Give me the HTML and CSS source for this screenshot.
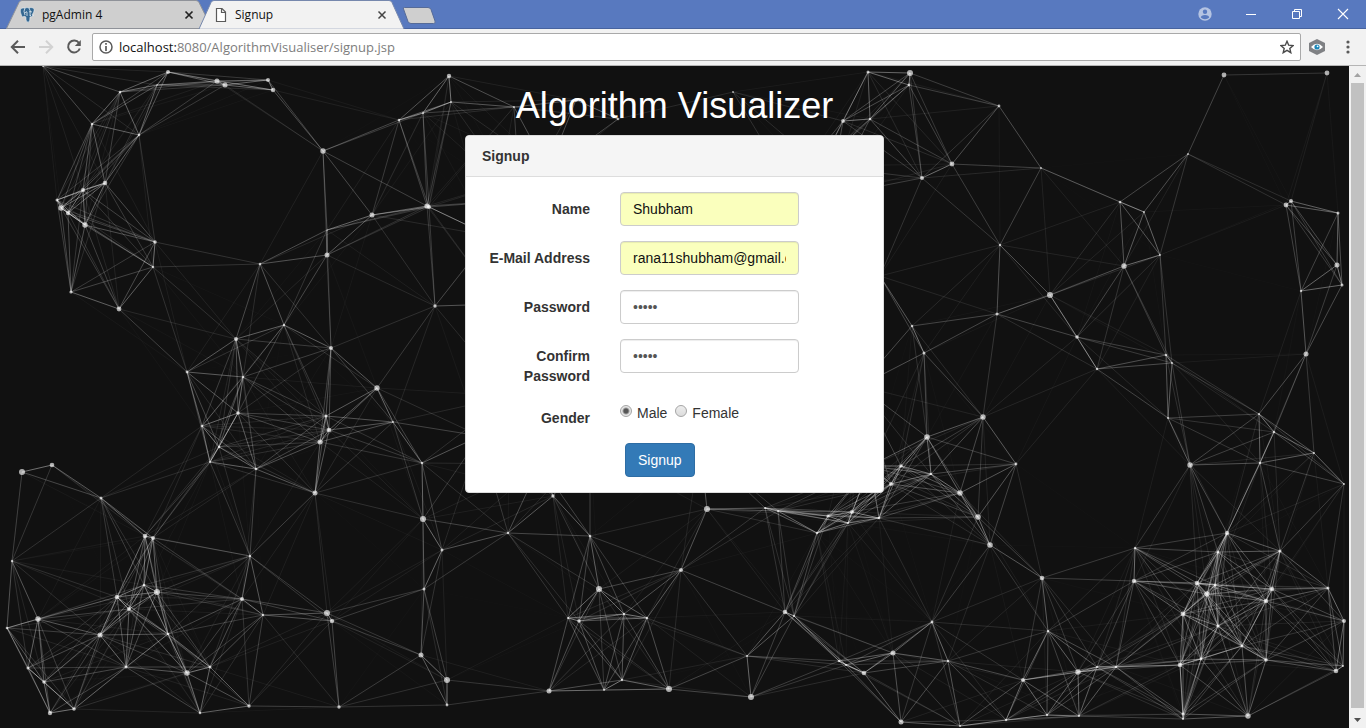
FILE: index.html
```html
<!DOCTYPE html>
<html lang="en">
<head>
<meta charset="utf-8">
<title>Signup</title>
<link rel="stylesheet" href="styles.css">
</head>
<body class="browser">
<header class="chrome">
  <div class="tab-strip">
    <svg class="tab-shapes" width="450" height="29" viewBox="0 0 450 29" aria-hidden="true">
      <path d="M6.500 28.500L19 2.500Q20 .5 22 .5H196Q198 .5 199 2.500L212 28.500Z" fill="#cfcfcf" stroke="#8f9299"/>
      <path d="M403.500 9Q402.500 7.500 404.500 7.500H428Q430 7.500 431 9.500L435 21Q436 23.500 433.500 23.500H411Q409 23.500 408 21.500Z" fill="#cfcfcf" stroke="#566b98"/>
      <path d="M199 29L211 2.500Q212 .5 214 .5H389Q391 .5 392 2.500L404 29Z" fill="#f2f2f2" stroke="#7688ad"/>
      <path d="M200 28.500H403V29H200Z" fill="#f2f2f2"/>
    </svg>
    <div class="tab">
      <svg width="16" height="16" viewBox="0 0 16 16" aria-hidden="true">
        <path d="M3 1C0 1 0 4 1 7C2 10 3 11 4 9C5 10 6 9 6 11V13Q7 16 9 15Q10 14 10 10Q12 10 14 8Q12 9 12 8C14 5 15 2 13 1Q11 0 9 1Q7 0 5 1Z" fill="#336791" stroke="#e4edf3" stroke-width=".6"/>
        <path d="M5 1Q3 4 5 8M9 1Q11 3 10 9M5 6Q6 4 7 5V9M9 5Q10 4 12 5M10 9L11 8" fill="none" stroke="#e4edf3" stroke-width=".8"/>
      </svg>
      <span class="tab-title">pgAdmin 4</span>
      <button class="tab-close" aria-label="Close pgAdmin 4"><svg width="10" height="10" viewBox="0 0 10 10"><path d="M1.500 1.500L8.500 8.500M8.500 1.500L1.500 8.500" stroke="#222" stroke-width="1.700"/></svg></button>
    </div>
    <div class="tab">
      <svg width="16" height="16" viewBox="0 0 16 16" aria-hidden="true"><path d="M3.500 1.500H9L12.500 5V14.500H3.500ZM8.500 1.500V5.500H12.500" fill="#fff" stroke="#5a5a5a" stroke-width="1.200"/></svg>
      <span class="tab-title">Signup</span>
      <button class="tab-close" aria-label="Close Signup"><svg width="10" height="10" viewBox="0 0 10 10"><path d="M1.500 1.500L8.500 8.500M8.500 1.500L1.500 8.500" stroke="#444" stroke-width="1.500"/></svg></button>
    </div>
    <div class="window-controls">
      <button aria-label="Profile"><svg width="14" height="14" viewBox="0 0 14 14"><circle cx="7" cy="7" r="6.700" fill="#b4c3e2"/><circle cx="7" cy="4.800" r="2.200" fill="#5879bf"/><path d="M2.800 10.500Q3 8 7 8T11.200 10.500Q9.500 12.300 7 12.300T2.800 10.500Z" fill="#5879bf"/></svg></button>
      <button aria-label="Minimize"><svg width="12" height="12" viewBox="0 0 12 12"><path d="M1 6.500H11" stroke="#fff"/></svg></button>
      <button aria-label="Restore"><svg width="12" height="12" viewBox="0 0 12 12"><path d="M1.500 3.500H8.500V10.500H1.500ZM3.500 3V1.500H10.500V8.500H9" fill="none" stroke="#fff"/></svg></button>
      <button aria-label="Close"><svg width="12" height="12" viewBox="0 0 12 12"><path d="M1 1L11 11M11 1L1 11" stroke="#fff" stroke-width="1.100"/></svg></button>
    </div>
  </div>
  <div class="toolbar">
    <button class="nav-button" aria-label="Back"><svg width="16" height="16" viewBox="0 0 16 16"><path d="M15 8H2M8 1.800L1.800 8L8 14.200" fill="none" stroke="#5a5a5a" stroke-width="2"/></svg></button>
    <button class="nav-button" aria-label="Forward"><svg width="16" height="16" viewBox="0 0 16 16"><path d="M1 8H14M8 1.800L14.200 8L8 14.200" fill="none" stroke="#d2d2d2" stroke-width="2"/></svg></button>
    <button class="nav-button" aria-label="Reload"><svg width="16" height="16" viewBox="0 0 16 16"><path d="M13 4A6 6 0 1 0 13.800 9.500" fill="none" stroke="#5a5a5a" stroke-width="2"/><path d="M14.800 1V7H8.800Z" fill="#5a5a5a"/></svg></button>
    <div class="omnibox">
      <svg width="14" height="14" viewBox="0 0 14 14" aria-hidden="true"><circle cx="7" cy="7" r="6" fill="none" stroke="#5a5a5a" stroke-width="1.500"/><path d="M7 3V4.700M7 6V11" stroke="#5a5a5a" stroke-width="1.700"/></svg>
      <div class="url">localhost:<span class="url-path">8080/AlgorithmVisualiser/signup.jsp</span></div>
      <button class="star" aria-label="Bookmark"><svg width="14" height="14" viewBox="0 0 14 14"><path d="M7 1.300L8.700 5.200L13 5.600L9.800 8.400L10.800 12.700L7 10.400L3.200 12.700L4.200 8.400L1 5.600L5.300 5.200Z" fill="none" stroke="#4a4a4a" stroke-width="1.400"/></svg></button>
    </div>
    <button class="extension" aria-label="Extension"><svg width="16" height="16" viewBox="0 0 16 16"><path d="M8 0L16 4V12L8 16L0 12V4Z" fill="#7f8184"/><path d="M2 8Q8 1.500 14 8Q8 14.500 2 8Z" fill="#fff"/><circle cx="8" cy="8" r="2.600" fill="#1b87b8"/><circle cx="8.600" cy="7.300" r=".9" fill="#fff"/></svg></button>
    <button class="menu" aria-label="Menu"><svg width="4" height="14" viewBox="0 0 4 14"><circle cx="2" cy="2" r="1.600" fill="#5a5a5a"/><circle cx="2" cy="7" r="1.600" fill="#5a5a5a"/><circle cx="2" cy="12" r="1.600" fill="#5a5a5a"/></svg></button>
  </div>
</header>
<div class="viewport">
  <main class="page">
    <svg class="particles" id="particles" viewBox="0 0 1349 662" preserveAspectRatio="xMidYMid slice" aria-hidden="true"></svg>
    <h1 class="page-title">Algorithm Visualizer</h1>
    <section class="panel">
      <h2 class="panel-heading">Signup</h2>
      <form class="panel-body">
        <div class="field"><label class="field-label" for="name">Name</label><input class="text-input autofilled" id="name" type="text" value="Shubham"></div>
        <div class="field"><label class="field-label" for="email">E-Mail Address</label><input class="text-input autofilled" id="email" type="text" value="rana11shubham@gmail.com"></div>
        <div class="field"><label class="field-label" for="password">Password</label><input class="text-input" id="password" type="password" value="abcde"></div>
        <div class="field"><label class="field-label" for="confirm">Confirm Password</label><input class="text-input" id="confirm" type="password" value="abcde"></div>
        <div class="field" role="radiogroup" aria-labelledby="gender"><span class="field-label" id="gender">Gender</span>
          <div class="choices">
            <input class="radio" type="radio" name="gender" id="male" checked><label for="male">Male</label>
            <input class="radio" type="radio" name="gender" id="female"><label for="female">Female</label>
          </div>
        </div>
        <button class="submit" type="button">Signup</button>
      </form>
    </section>
  </main>
  <div class="scrollbar" aria-hidden="true">
    <svg width="17" height="17" viewBox="0 0 17 17"><path d="M5 11L8.500 7L12 11Z" fill="#a3a3a3"/></svg>
    <div class="thumb"></div>
    <svg width="17" height="17" viewBox="0 0 17 17"><path d="M5 7L8.500 11L12 7Z" fill="#505050"/></svg>
  </div>
</div>
<script src="particles.js"></script>
</body>
</html>
```
FILE: styles.css
```css
* { box-sizing: border-box; }

.browser {
  margin: 0;
  height: 100vh;
  display: flex;
  flex-direction: column;
  overflow: hidden;
  background: #111;
  font-family: "Liberation Sans", Arial, sans-serif;
}

.browser button {
  font: inherit;
  cursor: pointer;
}

.chrome {
  flex: none;
  font-family: "Open Sans", "Noto Sans", sans-serif;
}

.chrome button {
  display: flex;
  align-items: center;
  justify-content: center;
  padding: 0;
  border: 0;
  background: none;
}

.tab-strip {
  position: relative;
  display: flex;
  height: 29px;
  background: #5879bf;
  box-shadow: inset 0 -1px #47639f;
}

.tab-shapes {
  position: absolute;
  left: 0;
  top: 0;
}

.tab {
  position: relative;
  display: flex;
  align-items: center;
  width: 193px;
  margin-left: 20px;
  gap: 6px;
  font-size: 12px;
  color: #111;
}

.tab + .tab { margin-left: 0; }

.tab-title { flex: 1; }

.tab-close {
  width: 10px;
  margin-right: 19px;
}

.tab + .tab .tab-close { margin-right: 19px; }

.window-controls {
  display: flex;
  margin-left: auto;
  height: 27px;
}

.window-controls button { width: 46px; }

.toolbar {
  display: flex;
  align-items: center;
  height: 37px;
  padding: 0 11px 0 10px;
  background: #f2f2f2;
  border-bottom: 1px solid #b5b5b5;
}

.nav-button { margin-right: 12px; }

.omnibox {
  flex: 1;
  display: flex;
  align-items: center;
  height: 28px;
  padding: 0 6px;
  gap: 6px;
  margin-right: 8px;
  margin-left: -2px;
  background: #fff;
  border: 1px solid #a9a9a9;
  border-radius: 2px;
  font-size: 13px;
  color: #111;
}

.url { flex: 1; }

.url-path { color: #7d7d7d; }

.menu {
  width: 14px;
  margin-left: 16px;
}

.viewport {
  flex: 1;
  display: flex;
  min-height: 0;
}

.page {
  position: relative;
  flex: 1;
  min-width: 0;
  display: flex;
  flex-direction: column;
  align-items: center;
  overflow: hidden;
  background: #111;
  font-size: 14px;
  line-height: 20px;
  color: #333;
}

.particles {
  position: absolute;
  inset: 0;
  width: 100%;
  height: 100%;
}

.page-title {
  position: relative;
  margin: 20px 0 9px;
  font-size: 36px;
  font-weight: 400;
  line-height: 40px;
  color: #fff;
}

.panel {
  position: relative;
  width: 100%;
  max-width: 419px;
  background: #fff;
  border: 1px solid #ddd;
  border-radius: 4px;
}

.panel-heading {
  margin: 0;
  padding: 10px 16px;
  font-size: 14px;
  font-weight: 700;
  background: #f5f5f5;
  border-bottom: 1px solid #ddd;
  border-radius: 3px 3px 0 0;
}

.panel-body {
  display: flex;
  flex-direction: column;
  gap: 15px;
  padding: 15px 16px;
}

.field {
  display: grid;
  grid-template-columns: 108px 179px;
  column-gap: 30px;
  align-items: start;
}

.field-label {
  padding-top: 7px;
  font-weight: 700;
  text-align: right;
}

.text-input {
  width: 100%;
  height: 34px;
  padding: 6px 12px;
  font: inherit;
  color: #555;
  background: #fff;
  border: 1px solid #ccc;
  border-radius: 4px;
  box-shadow: inset 0 1px 1px rgba(0, 0, 0, .075);
}

.autofilled {
  color: #111;
  background: #faffbd;
}

.choices {
  display: flex;
  align-items: center;
  padding-top: 2px;
}

.choices label { margin-right: 8px; }

.radio {
  appearance: none;
  width: 12px;
  height: 12px;
  margin: 0 5px 4px 0;
  border: 1px solid #a5a5a5;
  border-radius: 50%;
  background: linear-gradient(#ededed, #dcdcdc);
}

.radio:checked {
  background: radial-gradient(circle, #555 0 2px, #e6e6e6 4px);
}

.submit {
  align-self: flex-start;
  margin-left: 143px;
  height: 34px;
  padding: 6px 12px;
  color: #fff;
  background: #337ab7;
  border: 1px solid #2e6da4;
  border-radius: 4px;
}

.scrollbar {
  flex: none;
  display: flex;
  flex-direction: column;
  width: 17px;
  background: #f1f1f1;
}

.thumb {
  flex: 1;
  margin: 0 2px;
  background: #c1c1c1;
}

.scrollbar svg + .thumb + svg { margin-top: 3px; }
```
FILE: particles.js
```javascript
// Particle positions (x, y) in page space, then radius.
const particles = [
  [43,0,1],[168,6,2],[157,19,.7],[120,26,1.3],[92,58,1.3],[139,69,1.3],[217,15,2.5],[225,19,2.5],[268,14,2],[273,24,2.2],
  [105,117,2.3],[83,124,2],[57,134,1.5],[61,142,2.7],[68,147,2.2],[85,159,2.7],[155,176,1.8],[153,201,1.2],[323,85,2.7],
  [399,54,1.3],[423,47,1],[449,10,2.2],[451,36,.9],[372,149,2.5],[427,140,2.6],[429,141,2],[327,164,.6],[327,189,2.5],[260,198,1.3],
  [71,226,1.6],[119,243,2.4],[236,273,2],[284,259,1.2],[331,282,2],[187,306,1.4],[243,311,1.2],[377,322,2.7],[238,347,1.8],
  [326,350,1.5],[329,364,2.3],[320,376,2.5],[202,360,1.3],[219,381,1.3],[210,396,1],[256,403,1.3],[393,356,.9],[422,397,1.2],
  [435,240,1.7],[22,406,3],[52,399,2.3],[101,432,1.5],[315,427,2.5],[145,470,2.3],[153,472,2],[250,490,1.2],[12,495,1.2],
  [144,519,1.3],[117,531,2.3],[157,526,3],[129,543,2],[242,533,2],[263,549,1.2],[38,553,2.7],[7,562,1.3],[100,569,2.5],
  [168,568,1.3],[28,602,1.5],[126,601,1.5],[187,607,2.7],[210,601,1.5],[44,616,1.8],[50,647,2.2],[74,643,1.8],[200,647,1.3],
  [249,640,1.7],[327,547,3],[332,555,2.2],[339,641,1.7],[423,453,3],[442,484,1.5],[424,523,1.5],[421,589,2.5],[447,614,3],
  [447,639,1.4],[553,430,1.7],[508,467,1.2],[590,470,1.3],[707,443,3],[681,504,2],[599,523,3],[568,552,1],[579,555,1.8],
  [624,548,1.2],[647,552,1.2],[549,625,2.5],[604,624,.9],[622,614,1.2],[669,623,3],[785,546,2.3],[794,550,1],[747,590,1],
  [751,631,3],[839,595,1.3],[846,599,1],[864,607,2.3],[893,587,2.5],[901,656,2.5],[765,442,1],[778,445,1],[828,450,1.6],
  [852,446,2],[848,457,1],[817,467,1.3],[879,452,1.3],[868,6,1.5],[910,7,3],[909,19,1.4],[843,55,1.9],[870,53,1.3],
  [999,40,1.4],[952,98,2.4],[922,112,2],[1041,102,.9],[1000,179,1.2],[1188,88,.9],[1224,9,2.4],[1327,7,2.4],[1120,136,1.3],
  [1144,146,.9],[1160,189,.9],[1124,200,2.7],[1291,135,2],[1286,139,2.4],[1338,147,1.5],[1337,199,2.5],[1342,219,1.5],
  [912,260,1.3],[924,287,1.5],[997,248,1.5],[1050,229,3],[1077,271,1.8],[1097,303,1.2],[1166,289,1.3],[1172,297,1],
  [1168,352,1],[1301,225,1.2],[1306,288,2.5],[983,351,2.7],[927,371,2.8],[1016,398,1.4],[901,400,1.8],[931,408,1.3],
  [891,418,2],[960,427,2.7],[1190,399,2.7],[1259,348,1],[1274,366,1.2],[1260,397,1.2],[1314,387,1],[1344,418,1],
  [978,451,2.8],[990,479,2.8],[1042,512,2.3],[1135,482,1.2],[1134,515,2.2],[932,556,1.4],[1048,565,1.2],[948,595,1.2],
  [1023,614,2],[1078,606,2.7],[1097,601,1],[1116,601,1.2],[960,660,1],[1006,654,1.2],[1047,649,1.2],[1079,650,1],
  [1227,467,2.2],[1218,486,1.5],[1280,485,1.6],[1197,517,2.3],[1215,519,1.5],[1207,528,2.7],[1272,523,2.2],[1266,535,2.2],
  [1328,522,1.5],[1183,548,2.4],[1218,560,1.6],[1242,580,1.4],[1344,555,2],[1180,599,2.3],[1201,593,1.4],[1266,594,1.8],
  [1336,605,2.3],[1343,600,1],[1183,648,1.5],[1183,653,1],[1248,650,2.7],[576,34,2],[618,53,1.3],[733,26,.9],[514,41,1],
  [520,134,1],[490,170,1],[548,104,1],[500,238,1],[510,330,1],[480,370,1],[540,398,1],[590,380,1],[700,380,1],[790,120,1],
  [820,100,1],[830,130,1],[880,210,1],[860,320,1],[870,400,1]
];

const LINK_DISTANCE = 150;
const svg = document.getElementById("particles");

function add(name, attributes) {
  const node = document.createElementNS("http://www.w3.org/2000/svg", name);
  for (const key in attributes) node.setAttribute(key, attributes[key]);
  svg.appendChild(node);
}

particles.forEach(([x1, y1], i) => {
  particles.slice(i + 1).forEach(([x2, y2]) => {
    const distance = Math.hypot(x2 - x1, y2 - y1);
    if (distance >= LINK_DISTANCE) return;
    const opacity = 0.5 * (1 - distance / LINK_DISTANCE);
    add("line", { x1, y1, x2, y2, stroke: "#fff", "stroke-opacity": opacity.toFixed(3) });
  });
});

particles.forEach(([cx, cy, r]) => {
  add("circle", { cx, cy, r, fill: "#fff", "fill-opacity": 0.65 });
});
```
